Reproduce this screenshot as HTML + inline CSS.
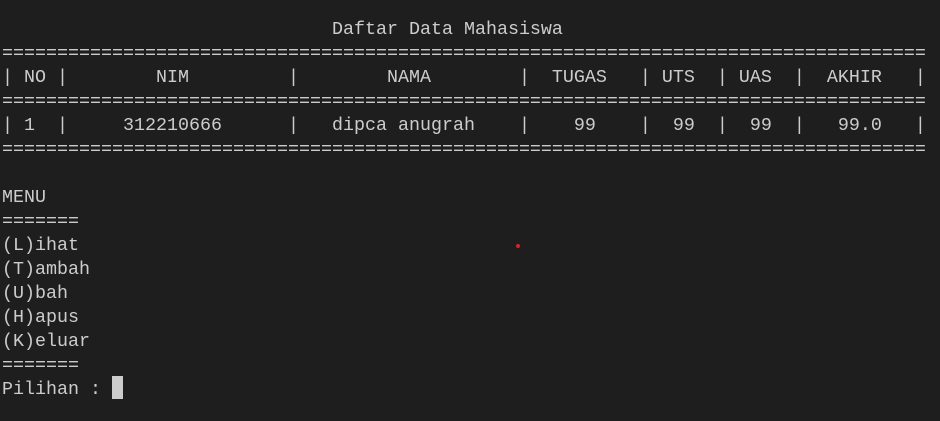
<!DOCTYPE html>
<html><head><meta charset="utf-8"><style>
html,body{margin:0;padding:0;background:#0c0c0c;}
body{width:940px;height:421px;background:#1e1e1e;position:relative;overflow:hidden;}
pre{position:absolute;left:2px;top:18px;margin:0;font-family:"Liberation Mono",monospace;font-size:18.33px;line-height:24px;color:#cccccc;white-space:pre;}
.cur{position:absolute;left:112px;top:376px;width:11px;height:23px;background:#cccccc;}
.dot{position:absolute;left:516px;top:244px;width:4px;height:4px;border-radius:50%;background:#e02020;}
</style></head><body>
<pre>                              Daftar Data Mahasiswa
====================================================================================
| NO |        NIM         |        NAMA        |  TUGAS   | UTS  | UAS  |  AKHIR   |
====================================================================================
| 1  |     312210666      |   dipca anugrah    |    99    |  99  |  99  |   99.0   |
====================================================================================

MENU
=======
(L)ihat
(T)ambah
(U)bah
(H)apus
(K)eluar
=======
Pilihan : </pre>
<div class="cur"></div>
<div class="dot"></div>
</body></html>
